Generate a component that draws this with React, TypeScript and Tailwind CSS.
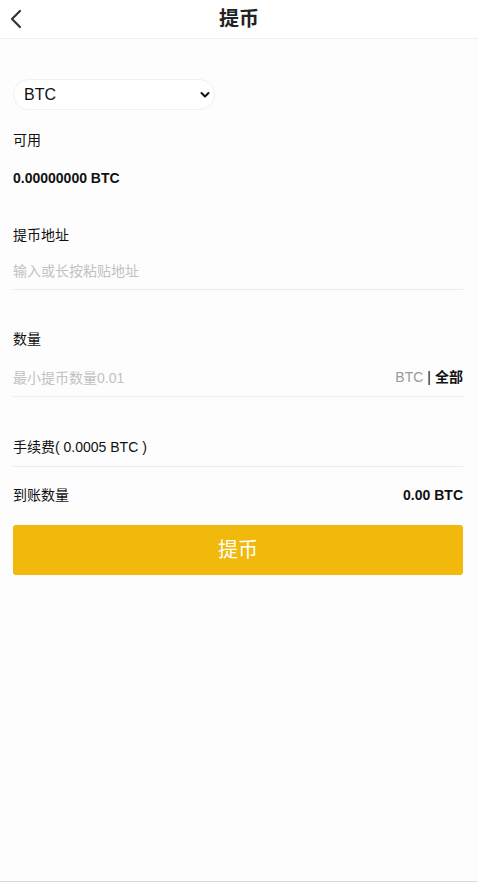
import { useState } from "react";

const FONT = { fontFamily: '"Liberation Sans", "Noto Sans CJK SC", sans-serif' };

export default function App() {
  const [coin, setCoin] = useState("BTC");

  return (
    <div className="min-h-[882px] bg-[#fdfdfd] text-[#111] flex flex-col border-b border-[#d9d9d9]" style={FONT}>
      {/* Header */}
      <div className="relative h-[39px] flex items-center justify-center border-b border-[#eeeeee] bg-white">
        <button className="absolute left-[8px] top-[8px] w-[16px] h-[22px] flex items-center justify-center">
          <svg width="12" height="20" viewBox="0 0 12 20" fill="none">
            <path d="M10 2 L2 10 L10 18" stroke="#333" strokeWidth="2.2" strokeLinecap="round" strokeLinejoin="round" />
          </svg>
        </button>
        <h1 className="text-[20px] font-bold text-[#222] leading-none">提币</h1>
      </div>

      <div className="pl-[13px] pr-[15px] flex flex-col">
        {/* Coin select */}
        <div className="mt-[40px] relative w-[202px] h-[31px] rounded-full border border-[#f0f0f0] bg-white">
          <select
            value={coin}
            onChange={(e) => setCoin(e.target.value)}
            className="appearance-none w-full h-full bg-transparent pl-[10px] text-[16px] text-[#111] outline-none"
          >
            <option>BTC</option>
            <option>ETH</option>
            <option>USDT</option>
          </select>
          <svg className="absolute right-[4px] top-[11px] pointer-events-none" width="10" height="8" viewBox="0 0 10 8">
            <path d="M1.5 2 L5 5.5 L8.5 2" stroke="#111" strokeWidth="2" fill="none" strokeLinecap="round" strokeLinejoin="round" />
          </svg>
        </div>

        <div className="mt-[20px] text-[14px] leading-[20px]">可用</div>
        <div className="mt-[18px] text-[14px] font-bold leading-[20px]">0.00000000 BTC</div>

        <div className="mt-[37px] text-[14px] leading-[20px]">提币地址</div>
        <input
          placeholder="输入或长按粘贴地址"
          className="mt-[8px] h-[37px] text-[14px] border-b border-[#ececec] bg-transparent outline-none placeholder:text-[#c2c2c2]"
        />

        <div className="mt-[39px] text-[14px] leading-[20px]">数量</div>
        <div className="mt-[10px] h-[38px] flex items-center border-b border-[#ececec]">
          <input
            placeholder="最小提币数量0.01"
            className="flex-1 h-full text-[14px] bg-transparent outline-none placeholder:text-[#c2c2c2]"
          />
          <span className="text-[14px] text-[#999]">BTC</span>
          <span className="text-[14px] text-[#111] mx-[4px]">|</span>
          <span className="text-[14px] font-bold text-[#111]">全部</span>
        </div>

        <div className="mt-[32px] h-[38px] flex items-center border-b border-[#ececec] text-[14px]">
          手续费( 0.0005 BTC )
        </div>

        <div className="mt-[18px] flex items-center justify-between text-[14px] leading-[20px]">
          <span>到账数量</span>
          <span className="font-bold">0.00 BTC</span>
        </div>

        <button className="mt-[20px] h-[50px] w-full rounded-[3px] bg-[#f0b90b] text-white text-[20px]">
          提币
        </button>
      </div>
    </div>
  );
}
